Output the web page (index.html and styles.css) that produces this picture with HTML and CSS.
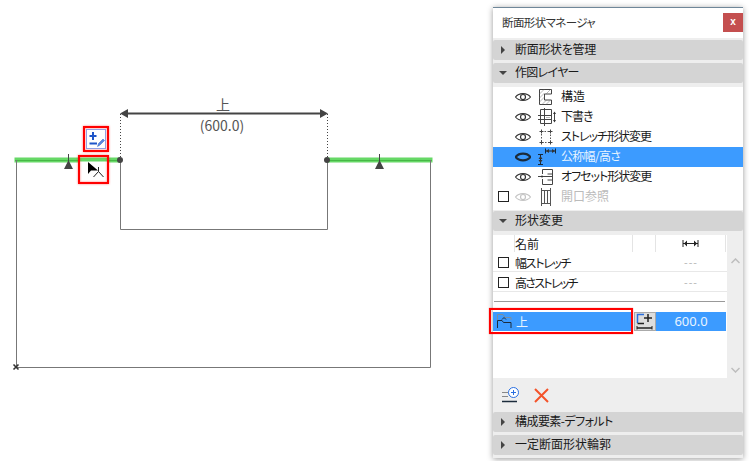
FILE: index.html
```html
<!DOCTYPE html>
<html lang="ja">
<head>
<meta charset="utf-8">
<title>断面形状マネージャ</title>
<link rel="stylesheet" href="styles.css">
</head>
<body>
<div class="app">
  <div class="canvas">
    <svg class="drawing" width="493" height="461" viewBox="0 0 493 461">
      <path class="green" d="M14.500 160H120M328 160H432.500"/>
      <path class="green-core" d="M15 160.500H120M328 160.500H432"/>
      <path class="profile" d="M16.500 160V367.500H430.500V160M120.500 160V229.500H327.500V160"/>
      <path class="dots" d="M120.500 114V158M327.500 114V158"/>
      <path class="dim" d="M125 113.500H323"/>
      <path class="fill" d="M120 113.500l8-4.500v9zM328 113.500l-8-4.500v9z"/>
      <circle class="fill" cx="120" cy="160" r="3"/>
      <circle class="fill" cx="327" cy="160" r="3"/>
      <path class="stem" d="M68.500 154V161M379.500 154V161"/>
      <path class="fill" d="M68.500 160l4.500 9h-9zM379.500 160l4.500 9h-9z"/>
      <path class="cross" d="M13.500 364.500l5 5M18.500 364.500l-5 5"/>
      <text class="dim-label" x="223" y="110">上</text>
      <text class="dim-label" x="222" y="131">(600.0)</text>
      <rect class="tool-frame" x="86.500" y="129.500" width="19" height="19"/>
      <path class="tool-blue" d="M93 132V140M89.500 136H96.500M89.500 143.500H97"/>
      <path class="tool-pen" d="M97.500 146.500l1-3 4.500-4.500 1.500 1.500-4.500 4.500z"/>
      <rect class="cursor-bg" x="79" y="156" width="29" height="27"/>
      <path class="green-over" d="M79 159.500H108"/>
      <path class="cursor" d="M88 162V174L91 170.500H98z"/>
      <path class="cursor-line" d="M93.500 177L98.500 171.500L103.500 177M98.500 167V171.500"/>
      <rect class="red" x="84" y="127" width="24" height="24"/>
      <rect class="red" x="79" y="156" width="29" height="27"/>
    </svg>
  </div>

  <aside class="panel">
    <header class="title">
      <span class="title-text">断面形状マネージャ</span>
      <span class="close">x</span>
    </header>
    <div class="section"><i class="tri-r"></i><span class="ls-3">断面形状を管理</span></div>
    <div class="section"><i class="tri-d"></i><span class="ls-7">作図レイヤー</span></div>

    <ul class="layers">
      <li class="layer">
        <span class="check-slot"></span>
        <svg class="eye" viewBox="0 0 16 10"><path d="M.5 5C4 .5 12 .5 15.500 5 12 9.500 4 9.500 .5 5z"/><circle cx="8" cy="5" r="2.500"/></svg>
        <svg class="lay-icon" viewBox="0 0 18 18"><path d="M1.500 1.500H13.500V6H6.500V12H13.500V16.500H1.500z"/><path class="thin" d="M1.500 6L6 1.500M1.500 10L6.500 5M1.500 14L6.500 9M4 16.500L8.500 12M8 16.500L12.500 12M8 6L12.500 1.500"/></svg>
        <span class="lbl">構造</span>
      </li>
      <li class="layer">
        <span class="check-slot"></span>
        <svg class="eye" viewBox="0 0 16 10"><path d="M.5 5C4 .5 12 .5 15.500 5 12 9.500 4 9.500 .5 5z"/><circle cx="8" cy="5" r="2.500"/></svg>
        <svg class="lay-icon" viewBox="0 0 18 18"><path d="M2.500 1.500H13.500V15.500H2.500zM0 7.500H13.500M0 11.500H13.500M6.500 0V18M16.500 5V13"/><path class="thin" d="M8 9.500H12"/><path class="solid" d="M16.500 3.500l-1.500 2.500h3zM16.500 14.500l-1.500-2.500h3z"/></svg>
        <span class="lbl ls-10">下書き</span>
      </li>
      <li class="layer">
        <span class="check-slot"></span>
        <svg class="eye" viewBox="0 0 16 10"><path d="M.5 5C4 .5 12 .5 15.500 5 12 9.500 4 9.500 .5 5z"/><circle cx="8" cy="5" r="2.500"/></svg>
        <svg class="lay-icon" viewBox="0 0 18 18"><path class="dash" d="M3.500 3.500H12.500V14.500H3.500z"/><path d="M1.500 3.500H5.500M3.500 1.500V5.500M10.500 3.500H14.500M12.500 1.500V5.500M1.500 14.500H5.500M3.500 12.500V16.500M10.500 14.500H14.500M12.500 12.500V16.500"/></svg>
        <span class="lbl ls-10">ストレッチ形状変更</span>
      </li>
      <li class="layer is-selected">
        <span class="check-slot"></span>
        <svg class="eye eye-closed" viewBox="0 0 16 10"><path d="M.5 5C4 .5 12 .5 15.500 5 12 9.500 4 9.500 .5 5z"/></svg>
        <svg class="lay-icon" viewBox="0 0 18 18"><path d="M2.500 6V17M0 6.500H5M0 16.500H5M7.500 .5V5.500M17.500 .5V5.500M8 3H17"/><path class="solid" d="M2.500 8l-2 3h4zM2.500 15l-2-3h4zM8 3l3-2v4zM17 3l-3-2v4z"/></svg>
        <span class="lbl ls-15">公称幅/高さ</span>
      </li>
      <li class="layer">
        <span class="check-slot"></span>
        <svg class="eye" viewBox="0 0 16 10"><path d="M.5 5C4 .5 12 .5 15.500 5 12 9.500 4 9.500 .5 5z"/><circle cx="8" cy="5" r="2.500"/></svg>
        <svg class="lay-icon" viewBox="0 0 18 18"><path d="M4.500 1.500H14.500V6H9.500M4.500 1.500V6M4.500 11V16.500H14.500V12H9.500M0 8.500H14.500M14.500 6V12"/><circle class="solid" cx="4" cy="8.500" r="1"/></svg>
        <span class="lbl ls-10">オフセット形状変更</span>
      </li>
      <li class="layer is-muted">
        <span class="check"></span>
        <svg class="eye" viewBox="0 0 16 10"><path d="M.5 5C4 .5 12 .5 15.500 5 12 9.500 4 9.500 .5 5z"/><circle cx="8" cy="5" r="2.500"/></svg>
        <svg class="lay-icon lay-dark" viewBox="0 0 18 18"><path d="M3.500 0V18M12.500 0V18M6.500 2V16M9.500 2V16M3.500 2.500H12.500M3.500 15.500H12.500"/></svg>
        <span class="lbl">開口参照</span>
      </li>
    </ul>

    <div class="section section-3"><i class="tri-d"></i><span>形状変更</span></div>

    <div class="shape-area">
      <div class="shape-main">
        <div class="head-row">
          <span class="head-gap"></span>
          <span class="head-name">名前</span>
          <span class="head-mid"></span>
          <span class="head-val">
            <svg width="17" height="7" viewBox="0 0 17 7"><path class="width-icon" d="M1 0V7M16 0V7M1 3.500H16"/><path class="width-solid" d="M2 3.500l3-3v6zM15 3.500l-3-3v6z"/></svg>
          </span>
        </div>
        <div class="stretch-row"><span class="check"></span><span class="stretch-name"><span class="ls-13">幅ストレッチ</span></span><span class="dashes">---</span></div>
        <div class="stretch-row"><span class="check"></span><span class="stretch-name"><span class="ls-16">高さストレッチ</span></span><span class="dashes">---</span></div>
        <div class="rule-wrap"><hr class="rule"></div>
        <div class="param-row">
          <div class="param-name">
            <svg class="param-icon" width="15" height="15" viewBox="0 0 15 15"><path class="p-grey" d="M.5 6V.5H6L8 3.500H14V6"/><path class="p-dark" d="M.5 14V6.500H5L6.500 8.500H14V14"/><path class="p-dark" d="M5 5.500L7 3.500L9 5.500"/></svg>
            <span>上</span>
            <span class="red-box"></span>
          </div>
          <span class="param-btn">
            <svg width="18" height="17" viewBox="0 0 18 17"><path class="b-blue" d="M1.500 10V1.500H8"/><path class="b-line" d="M1.500 10.500H8M12 1V9M8 5H16M1 15H16"/><path class="b-thin" d="M1 13V16.500M16 13V16.500"/></svg>
          </span>
          <span class="param-val">600.0</span>
        </div>
      </div>
      <div class="scroll">
        <svg width="9" height="6" viewBox="0 0 9 6"><path d="M.5 5L4.500 1L8.500 5"/></svg>
        <svg width="9" height="6" viewBox="0 0 9 6"><path d="M.5 1L4.500 5L8.500 1"/></svg>
      </div>
    </div>

    <div class="toolbar">
      <svg class="tool-add" width="17" height="16" viewBox="0 0 17 16"><path class="a-grey" d="M0 5.500H6M0 9.500H6"/><path class="a-dark" d="M0 14.500H15"/><circle class="a-blue" cx="11.500" cy="5.500" r="5"/><path class="a-blue" d="M11.500 3V8M9 5.500H14"/></svg>
      <svg class="tool-del" width="15" height="15" viewBox="0 0 15 15"><path d="M1 1L14 14M14 1L1 14"/></svg>
    </div>

    <div class="section"><i class="tri-r"></i><span class="ls-5">構成要素-デフォルト</span></div>
    <div class="section"><i class="tri-r"></i><span>一定断面形状輪郭</span></div>
  </aside>
</div>
</body>
</html>
```

FILE: styles.css
```css
* { box-sizing: border-box; }
html, body { margin: 0; padding: 0; background: #fff; overflow: hidden; }
body {
  width: 749px; height: 461px;
  font-family: "Noto Sans CJK JP", "Noto Sans", sans-serif;
  font-feature-settings: "palt";
  color: #1a1a1a;
}
.app { display: flex; height: 461px; }
.canvas { width: 493px; flex: none; }
.drawing { display: block; }
.drawing path, .drawing rect { fill: none; }
.drawing .green { stroke: #66d866; stroke-width: 5; }
.drawing .green-core { stroke: #46b846; stroke-width: 1; }
.drawing .profile { stroke: #777; stroke-width: 1; }
.drawing .dots { stroke: #444; stroke-width: 1; stroke-dasharray: 1 2; }
.drawing .dim { stroke: #444; stroke-width: 2; }
.drawing .fill { fill: #444; }
.drawing .stem { stroke: #444; stroke-width: 1; }
.drawing .cross { stroke: #333; stroke-width: 1.6; }
.dim-label { font-size: 14px; fill: #555; text-anchor: middle; font-family: "Noto Sans CJK JP", "Noto Sans", sans-serif; }
.drawing .tool-frame { fill: #fff; stroke: #8fa8ee; }
.drawing .tool-blue { stroke: #1f55c8; stroke-width: 2; }
.drawing .tool-pen { fill: #5a86dd; stroke: #2f62c8; stroke-width: .5; }
.drawing .cursor-bg { fill: #fff; }
.drawing .green-over { stroke: #66d866; stroke-width: 4; }
.drawing .cursor { fill: #000; }
.drawing .cursor-line { stroke: #222; stroke-width: 1; }
.drawing .red { stroke: #f00; stroke-width: 2; filter: drop-shadow(0 0 1px rgba(255,0,0,.5)); }

.panel {
  width: 250px; height: 451px; margin-top: 7px; flex: none;
  background: #eee;
  border-top: 1px solid #6f8799;
  box-shadow: 0 1px 6px rgba(0,0,0,.4);
  display: flex; flex-direction: column;
}
.title { height: 30px; background: #fff; display: flex; align-items: center; justify-content: space-between; padding: 0 0 0 9px; margin-bottom: 2px; }
.title-text { font-size: 11.500px; color: #333; letter-spacing: -.6px; margin-top: -2px; }
.close { width: 20px; height: 19px; background: #c44f4f; color: #fff; font: bold 10px/18px "Liberation Sans", sans-serif; text-align: center; }
.section {
  height: 20px; background: #d4d4d4; border-radius: 2px; margin-bottom: 3px;
  display: flex; align-items: center; font-size: 12px; color: #1a1a1a; line-height: 20px;
}
.section > span { margin-top: -2px; }
.section i { flex: none; width: 22px; display: flex; justify-content: flex-start; }
.tri-r::before { content: ""; margin-left: 8px; border-left: 4px solid #444; border-top: 4px solid transparent; border-bottom: 4px solid transparent; }
.tri-d::before { content: ""; margin-left: 6px; border-top: 4px solid #444; border-left: 4px solid transparent; border-right: 4px solid transparent; }
.ls-3 { letter-spacing: -.3px; }
.ls-5 { letter-spacing: -.55px; }
.ls-7 { letter-spacing: -.7px; }
.ls-10 { letter-spacing: -1px; }
.ls-13 { letter-spacing: -1.3px; }
.ls-15 { letter-spacing: -.7px; }
.ls-16 { letter-spacing: -1.7px; }
.layers { list-style: none; margin: 1px 0 0; padding: 0; background: #fff; height: 124px; }
.layer { height: 20px; display: flex; align-items: center; font-size: 12px; }
.lbl { margin-top: -2px; }
.check-slot { width: 22px; flex: none; }
.check { width: 11px; height: 11px; border: 1px solid #222; margin: 0 6px 0 5px; flex: none; background: #fff; }
.eye { width: 16px; height: 10px; flex: none; margin-right: 7px; fill: none; stroke: #333; stroke-width: 1.2; }
.eye-closed { stroke: #1b2b3a; stroke-width: 2.2; }
.lay-icon { width: 18px; height: 18px; flex: none; margin-right: 5px; fill: none; stroke: #444; stroke-width: 1; }
.lay-icon .thin { stroke-width: .5; stroke: #777; }
.lay-icon .dash { stroke-dasharray: 1.500 1.500; stroke: #555; }
.lay-icon .solid { fill: #333; stroke: none; }
.is-selected { background: #3c9bff; color: #e8f4ff; }
.is-selected .lay-icon { stroke: #16283a; }
.is-muted { color: #bbb; }
.is-muted .eye { stroke: #c4c4c4; }
.lay-dark { stroke: #555; }
.section-3 { margin: 1px 0 4px; }
.shape-area { display: flex; height: 143px; flex: none; }
.shape-main { width: 234px; background: #fff; flex: none; }
.head-row { height: 17px; background: #fff; display: flex; font-size: 12px; line-height: 17px; align-items: stretch; }
.head-gap { width: 22px; border-right: 1px solid #e4e4e4; flex: none; }
.head-name { width: 117px; flex: none; }
.head-mid { width: 24px; border-left: 1px solid #e4e4e4; border-right: 1px solid #e4e4e4; flex: none; }
.head-val { width: 70px; border-right: 1px solid #e4e4e4; display: flex; align-items: center; justify-content: center; flex: none; }
.width-icon { fill: none; stroke: #222; stroke-width: 1; }
.width-solid { fill: #222; }
.stretch-row { height: 20px; border-bottom: 1px solid #e8e8e8; display: flex; align-items: center; font-size: 12px; padding-top: 1px; }
.stretch-name { width: 141px; flex: none; }
.dashes { width: 70px; text-align: center; color: #bbb; font-size: 11px; font-family: "Liberation Sans", sans-serif; letter-spacing: 1px; }
.rule-wrap { height: 20px; display: flex; align-items: center; padding-bottom: 2px; }
.rule { width: 231px; margin: 0 0 0 1px; border: 0; border-top: 1px solid #999; }
.param-row { height: 19px; display: flex; }
.param-name { width: 138px; flex: none; background: #3c9bff; color: #e8f4ff; position: relative; display: flex; align-items: center; font-size: 12px; padding-left: 4px; }
.param-icon { margin-right: 4px; }
.p-grey { fill: none; stroke: #7a8ea0; }
.p-dark { fill: none; stroke: #1c2c3c; }
.red-box { position: absolute; left: -4px; right: -2px; top: -4px; bottom: -3px; border: 2px solid #f00; box-shadow: 0 0 1px rgba(255,0,0,.6); }
.param-btn { width: 22px; margin-left: 3px; flex: none; background: #ddd; border: 1px solid #aaa; display: flex; align-items: center; justify-content: center; }
.b-blue { fill: none; stroke: #2a6fe0; stroke-width: 1.500; }
.b-line { fill: none; stroke: #222; stroke-width: 1.500; }
.b-thin { fill: none; stroke: #222; stroke-width: 1; }
.param-val { width: 70px; flex: none; background: #3c9bff; color: #e8f4ff; font: 13px/19px "Noto Sans", sans-serif; text-align: center; }
.scroll { flex: 1; display: flex; flex-direction: column; justify-content: space-between; align-items: center; padding: 23px 0 5px; }
.scroll svg { fill: none; stroke: #bdbdbd; stroke-width: 1.500; }
.toolbar { height: 34px; display: flex; align-items: center; gap: 15px; padding-left: 9px; flex: none; }
.a-grey { fill: none; stroke: #888; }
.a-dark { fill: none; stroke: #1c2c3c; stroke-width: 1.500; }
.a-blue { fill: #fff; stroke: #2a6fe0; }
.tool-del { fill: none; stroke: #f4532a; stroke-width: 2; }
```
